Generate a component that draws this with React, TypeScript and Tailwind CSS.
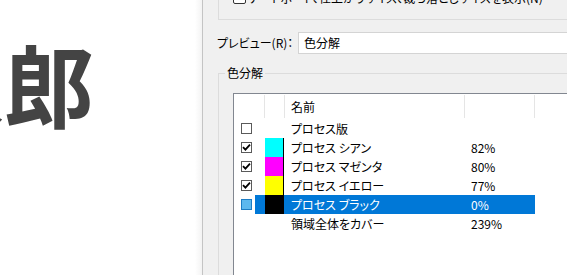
import React from "react";

type Row = {
  name: string;
  pct: string;
  color?: string;
  check: "none" | "off" | "on" | "sel";
  selected?: boolean;
};

const rows: Row[] = [
  { name: "プロセス版", pct: "", check: "off" },
  { name: "プロセス シアン", pct: "82%", color: "bg-[#00ffff]", check: "on" },
  { name: "プロセス マゼンタ", pct: "80%", color: "bg-[#ff00ff]", check: "on" },
  { name: "プロセス イエロー", pct: "77%", color: "bg-[#ffff00]", check: "on" },
  { name: "プロセス ブラック", pct: "0%", color: "bg-[#000000]", check: "sel", selected: true },
  { name: "領域全体をカバー", pct: "239%", check: "none" },
];

function Check({ state }: { state: Row["check"] }) {
  if (state === "none") return null;
  if (state === "sel")
    return <div className="w-[11px] h-[11px] border border-[#1c7cc4] bg-[#5cb8ee]" />;
  return (
    <div className="w-[11px] h-[11px] border border-[#5a5a5a] bg-white flex items-center justify-center">
      {state === "on" && (
        <svg width="9" height="9" viewBox="0 0 9 9">
          <path d="M1 4.2 L3.4 6.6 L8 1.6" stroke="#000" strokeWidth="1.8" fill="none" />
        </svg>
      )}
    </div>
  );
}

export default function App() {
  return (
    <div
      className="w-[567px] h-[275px] flex overflow-hidden text-[12px] text-black [font-feature-settings:'palt']"
      style={{ fontFamily: '"Noto Sans CJK JP", "Noto Sans", sans-serif' }}
    >
      {/* Left preview panel */}
      <div className="w-[202px] h-full bg-white flex shrink-0 overflow-hidden">
        <div className="flex-1 overflow-hidden">
          <div className="-ml-[86px] pt-[37px] whitespace-nowrap text-[90px] leading-[90px] font-bold text-[#444444]">
            太郎
          </div>
        </div>
        <div className="w-[7px] h-full bg-gradient-to-r from-white to-[#f3f3f3]" />
      </div>
      <div className="w-px h-full bg-[#c4c4c4] shrink-0" />

      {/* Right dialog area */}
      <div className="flex-1 h-full bg-[#f0f0f0] overflow-hidden pl-[15px] flex flex-col">
        {/* upper group box (cut) */}
        <div className="w-[420px] h-[20px] shrink-0 border-l border-b border-[#dcdcdc] flex flex-col">
          <div className="flex items-center h-[13px] -mt-[9px] ml-[14px] whitespace-nowrap">
            <div className="w-[13px] h-[13px] border border-[#333333] bg-white rounded-[2px]" />
            <span className="ml-[3px] leading-[13px]">
              アートボード、仕上がりサイズ、裁ち落としサイズを表示(N)
            </span>
          </div>
        </div>

        {/* preview row */}
        <div className="flex items-center h-[22px] shrink-0 mt-[12px] w-[420px]">
          <div className="w-[81px] -ml-[1px] whitespace-nowrap">プレビュー(R)：</div>
          <div className="flex-1 h-[22px] bg-white border border-[#d4d4d4] flex items-center pl-[5px]">
            色分解
          </div>
        </div>

        {/* group box */}
        <fieldset className="mt-[11px] w-[420px] h-[300px] shrink-0 border border-[#dcdcdc]">
          <legend className="ml-[6px] px-[2px] leading-[16px]">色分解</legend>
          <div className="mt-[12px] ml-[14px] w-[400px] h-[300px] border border-[#828790] bg-white">
            {/* header */}
            <div className="flex items-center h-[25px]">
              <div className="w-[30px]" />
              <div className="w-px h-[23px] bg-[#e5e5e5]" />
              <div className="w-[19px]" />
              <div className="w-px h-[23px] bg-[#e5e5e5]" />
              <div className="w-[179px] pl-[6px] leading-[25px]">名前</div>
              <div className="w-px h-[23px] bg-[#e5e5e5]" />
              <div className="w-[69px]" />
              <div className="w-px h-[23px] bg-[#e5e5e5]" />
            </div>
            {rows.map((r) => (
              <div key={r.name} className="flex h-[19px]">
                <div className="w-[21px] pl-[7px] flex items-center">
                  <Check state={r.check} />
                </div>
                <div
                  className={
                    "w-[280px] h-full flex items-center whitespace-nowrap " +
                    (r.selected ? "bg-[#0078d7] text-white" : "")
                  }
                >
                  <div className="w-[10px]" />
                  {r.color ? (
                    <div className={"w-[19px] h-full border-r border-black " + r.color} />
                  ) : (
                    <div className="w-[19px] h-full" />
                  )}
                  <div className="w-[180px] pl-[7px]">{r.name}</div>
                  <div className="pl-[7px]">{r.pct}</div>
                </div>
              </div>
            ))}
          </div>
        </fieldset>
      </div>
    </div>
  );
}
